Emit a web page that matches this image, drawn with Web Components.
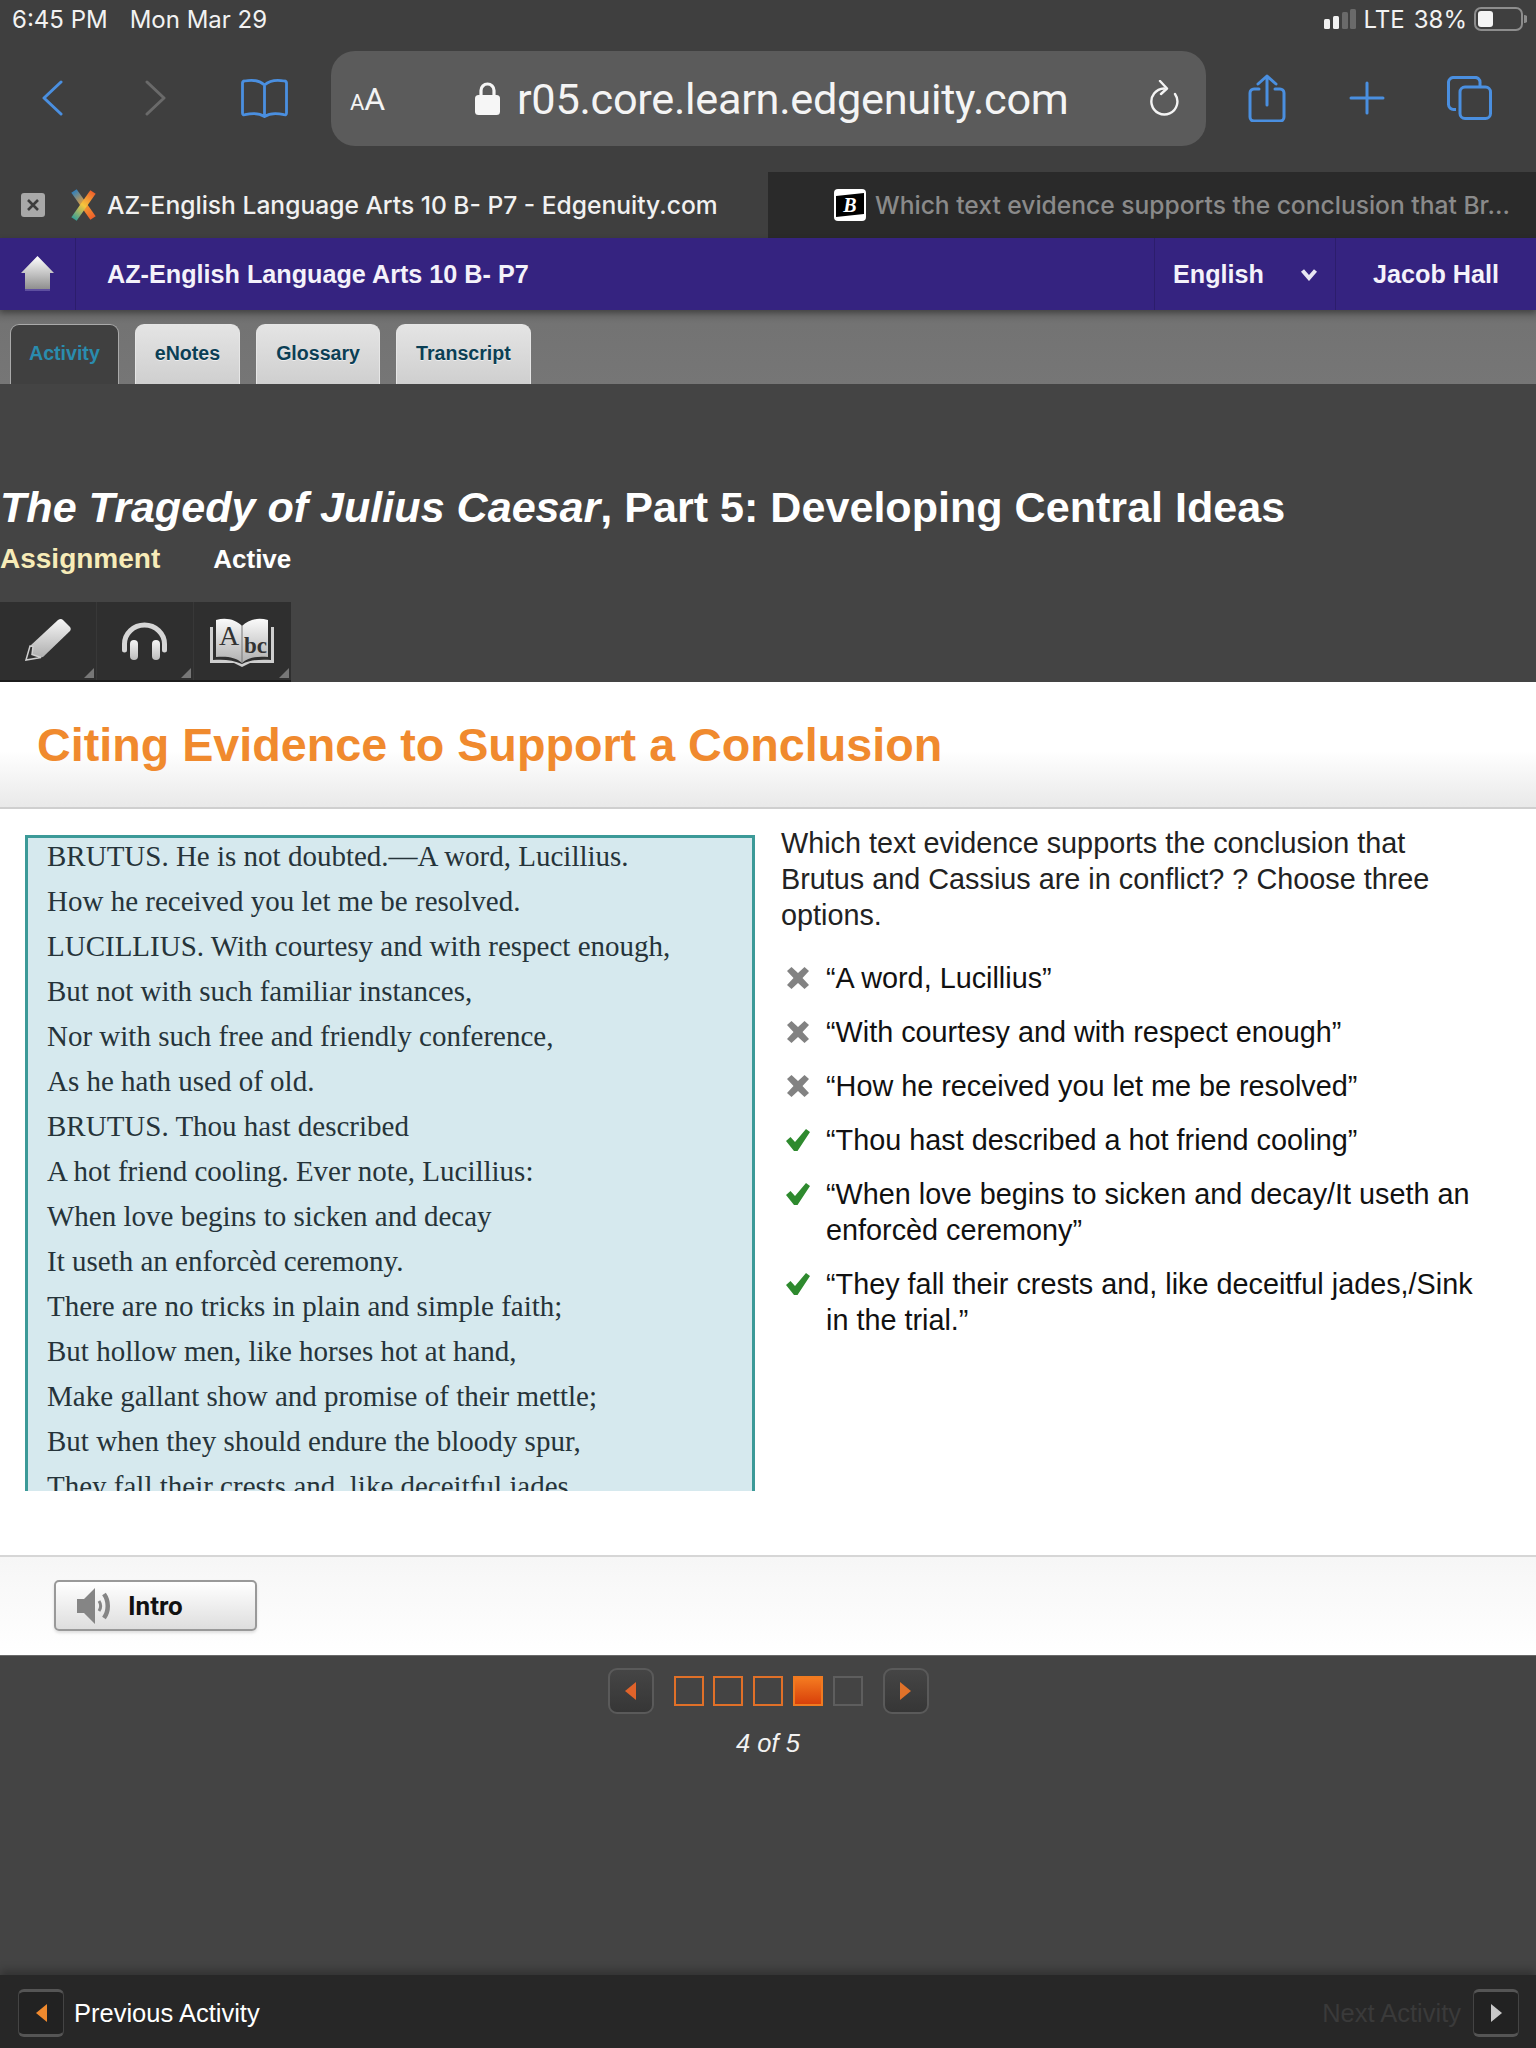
<!DOCTYPE html>
<html><head><meta charset="utf-8"><style>
html,body{margin:0;padding:0;background:#444}
body{width:1536px;height:2048px;overflow:hidden;font-family:"Liberation Sans",Arial,sans-serif;display:flex;flex-direction:column}
</style></head><body>
<status-bar></status-bar>
<browser-toolbar></browser-toolbar>
<browser-tabs></browser-tabs>
<course-bar></course-bar>
<activity-tabs></activity-tabs>
<lesson-head></lesson-head>
<section-title>Citing Evidence to Support a Conclusion</section-title>
<activity-body>
<passage-pane slot="left">
<p>BRUTUS. He is not doubted.—A word, Lucillius.</p>
<p>How he received you let me be resolved.</p>
<p>LUCILLIUS. With courtesy and with respect enough,</p>
<p>But not with such familiar instances,</p>
<p>Nor with such free and friendly conference,</p>
<p>As he hath used of old.</p>
<p>BRUTUS. Thou hast described</p>
<p>A hot friend cooling. Ever note, Lucillius:</p>
<p>When love begins to sicken and decay</p>
<p>It useth an enforcèd ceremony.</p>
<p>There are no tricks in plain and simple faith;</p>
<p>But hollow men, like horses hot at hand,</p>
<p>Make gallant show and promise of their mettle;</p>
<p>But when they should endure the bloody spur,</p>
<p>They fall their crests and, like deceitful jades,</p>
</passage-pane>
<question-pane slot="right">
<span slot="q">Which text evidence supports the conclusion that Brutus and Cassius are in conflict? ? Choose three options.</span>
<answer-item>“A word, Lucillius”</answer-item>
<answer-item>“With courtesy and with respect enough”</answer-item>
<answer-item>“How he received you let me be resolved”</answer-item>
<answer-item correct>“Thou hast described a hot friend cooling”</answer-item>
<answer-item correct>“When love begins to sicken and decay/It useth an enforcèd ceremony”</answer-item>
<answer-item correct>“They fall their crests and, like deceitful jades,/Sink in the trial.”</answer-item>
</question-pane>
</activity-body>
<intro-bar></intro-bar>
<pager-area></pager-area>
<footer-nav></footer-nav>
<script>
const def=(name,html)=>customElements.define(name,class extends HTMLElement{constructor(){super();this.attachShadow({mode:'open'}).innerHTML=html}});
const blue='#4a8fe0';
def('status-bar',`<style>:host{display:flex;height:40px;flex:none;box-sizing:border-box;background:#3f3f3f;color:#f2f2f2;align-items:center;padding:0 9px 2px 12px;font:24px Inter,sans-serif}
.d{margin-left:22px}.r{margin-left:auto;display:flex;align-items:center}
svg{display:block}</style>
<span>6:45 PM</span><span class="d">Mon Mar 29</span>
<span class="r"><svg width="32" height="22" viewBox="0 0 32 22" style="margin-right:8px"><rect x="0" y="11" width="6" height="10" rx="1.500" fill="#f2f2f2"/><rect x="9" y="8" width="6" height="13" rx="1.500" fill="#f2f2f2"/><rect x="18" y="4" width="6" height="17" rx="1.500" fill="#6a6a6a"/><rect x="26" y="1" width="6" height="20" rx="1.500" fill="#6a6a6a"/></svg>
<span>LTE</span><span style="margin-left:9px">38%</span>
<svg width="53" height="24" viewBox="0 0 53 24" style="margin-left:7px"><rect x="1" y="1" width="47" height="22" rx="6" fill="none" stroke="#8d8d8d" stroke-width="2"/><rect x="4" y="4" width="15" height="16" rx="3" fill="#f5f5f5"/><path d="M50 8a4 4 0 0 1 0 8z" fill="#8d8d8d"/></svg></span>`);
def('browser-toolbar',`<style>:host{display:flex;flex:none;height:132px;box-sizing:border-box;padding-bottom:16px;background:#3f3f3f;align-items:center}
svg{display:block;flex:none}
.url{flex:none;width:875px;height:95px;margin-left:43px;background:#5b5b5b;border-radius:24px;display:flex;align-items:center;color:#f4f4f4}
.aa{margin-left:19px;width:41px;margin-top:2px;font:32px Roboto,sans-serif;white-space:nowrap}.aa small{font-size:22px}
.host{font:43.300px Roboto,sans-serif;margin:2px 0 0 17px;letter-spacing:-.3px;white-space:nowrap}
.lock{margin-left:84px}
.rl{margin-left:auto;margin-right:27px}
</style>
<svg style="margin-left:42px" width="21" height="36" viewBox="0 0 21 36"><path d="M19 2 2 18l17 16" fill="none" stroke="${blue}" stroke-width="3" stroke-linecap="round" stroke-linejoin="round"/></svg>
<svg style="margin-left:82px" width="21" height="36" viewBox="0 0 21 36"><path d="M2 2l17 16L2 34" fill="none" stroke="#6a6a6a" stroke-width="3" stroke-linecap="round" stroke-linejoin="round"/></svg>
<svg style="margin-left:75px" width="47" height="40" viewBox="0 0 47 40"><path d="M23.500 7C19 3 11 1.500 3.500 3 2 3 1.500 4 1.500 5v30c0 2 1 2 2.500 1.700C11 35 19 35.500 23.500 38.500 28 35.500 36 35 43 36.700c1.500.3 2.500.3 2.500-1.700V5c0-1-.5-2-2-2C36 1.500 28 3 23.500 7zm0 0v31" fill="none" stroke="${blue}" stroke-width="2.800" stroke-linejoin="round"/></svg>
<div class="url"><span class="aa"><small>A</small>A</span>
<svg class="lock" width="25" height="33" viewBox="0 0 25 33"><path d="M6 15V8.500a6.500 6.500 0 0 1 13 0V15" fill="none" stroke="#f6f6f6" stroke-width="3.200"/><rect x="0" y="13" width="25" height="20" rx="3.500" fill="#f6f6f6"/></svg>
<span class="host">r05.core.learn.edgenuity.com</span>
<svg class="rl" width="30" height="36" viewBox="0 0 30 36"><path d="M15 8.500A13 13 0 1 0 26 14" fill="none" stroke="#f4f4f4" stroke-width="2.400" stroke-linecap="round"/><path d="M11 1l7 7.500-6 5.500" fill="none" stroke="#f4f4f4" stroke-width="2.400" stroke-linecap="round" stroke-linejoin="round"/></svg>
</div>
<svg style="margin-left:42px" width="38" height="48" viewBox="0 0 38 48"><path d="M11 15H6a4 4 0 0 0-4 4v24a4 4 0 0 0 4 4h26a4 4 0 0 0 4-4V19a4 4 0 0 0-4-4h-5M19 31V2M10 10l9-8 9 8" fill="none" stroke="${blue}" stroke-width="3" stroke-linecap="round" stroke-linejoin="round"/></svg>
<svg style="margin-left:63px" width="36" height="34" viewBox="0 0 36 34"><path d="M18 2v30M2 17h32" fill="none" stroke="${blue}" stroke-width="3" stroke-linecap="round"/></svg>
<svg style="margin-left:62px" width="45" height="44" viewBox="0 0 45 44"><rect x="13" y="11" width="30.500" height="31.500" rx="5" fill="none" stroke="${blue}" stroke-width="3"/><path d="M9 33.500H7a5 5 0 0 1-5.500-5V7A5 5 0 0 1 7 1.500h20A5 5 0 0 1 33 7v3" fill="none" stroke="${blue}" stroke-width="3"/></svg>`);
def('browser-tabs',`<style>:host{display:flex;flex:none;height:66px;position:relative}
.t{flex:none;width:768px;display:flex;align-items:center;font:500 24.600px Inter,sans-serif;white-space:nowrap;overflow:hidden;box-sizing:border-box}
.a{background:#3f3f3f;color:#f1f1f1;padding-left:21px}.b{background:#2a2a2a;color:#8a8a8a;padding-left:66px}
svg{display:block;flex:none}
</style><div class="t a">
<svg width="24" height="24" viewBox="0 0 24 24"><rect width="24" height="24" rx="3" fill="#a8a8a8"/><path d="M7 7l10 10M17 7 7 17" stroke="#3d3d3d" stroke-width="2.600"/></svg>
<svg style="margin-left:23px" width="30" height="32" viewBox="0 0 30 32"><defs><linearGradient id="a" gradientUnits="userSpaceOnUse" x1="5" y1="2" x2="26" y2="30"><stop offset="0" stop-color="#2a7fc0"/><stop offset=".5" stop-color="#f4a030"/><stop offset="1" stop-color="#ef5a2a"/></linearGradient><linearGradient id="b" gradientUnits="userSpaceOnUse" x1="25" y1="2" x2="5" y2="30"><stop offset="0" stop-color="#ef5a2a"/><stop offset=".5" stop-color="#f6c63c"/><stop offset="1" stop-color="#2f9e9a"/></linearGradient></defs><path d="M6 2 25 29" stroke="url(#a)" stroke-width="6.500" fill="none"/><path d="M25 3 6 30" stroke="url(#b)" stroke-width="6.500" fill="none"/></svg>
<span style="margin-left:9px">AZ-English Language Arts 10 B- P7 - Edgenuity.com</span></div>
<div class="t b"><svg width="32" height="32" viewBox="0 0 32 32"><rect width="32" height="32" rx="4" fill="#fff"/><path d="M2 7 30 4v21L2 28z" fill="#000"/><text x="16" y="22.500" text-anchor="middle" font-family="Liberation Serif" font-style="italic" font-weight="bold" font-size="20" fill="#fff">B</text></svg>
<span style="margin-left:9px">Which text evidence supports the conclusion that Br...</span></div>`);
def('course-bar',`<style>:host{display:flex;flex:none;height:72px;background:#352380;color:#f4f2fa;font:bold 25.200px "Liberation Sans",sans-serif;align-items:stretch;box-shadow:0 3px 6px rgba(0,0,0,.35);position:relative;z-index:1}
.h{width:75px;border-right:1px solid #2c1d6c;display:flex;align-items:center}
.h svg{margin-left:21px}
.n{flex:1;display:flex;align-items:center;padding-left:31px}
.l{width:181px;border-left:1px solid #2c1d6c;display:flex;align-items:center;padding-left:18px;box-sizing:border-box;position:relative}
.u{width:201px;border-left:1px solid #2c1d6c;display:flex;align-items:center;padding-left:37px;box-sizing:border-box}
svg{display:block}</style>
<div class="h"><svg width="33" height="36" viewBox="0 0 33 36"><defs><linearGradient id="g" x1="0" x2="0" y1="0" y2="1"><stop offset="0" stop-color="#fff"/><stop offset="1" stop-color="#8f8f8f"/></linearGradient></defs><path d="M16.500 0 33 17h-4v16H4V17H0z" fill="url(#g)"/><rect x="4" y="33" width="25" height="2" fill="#5e4fa0"/></svg></div>
<div class="n">AZ-English Language Arts 10 B- P7</div>
<div class="l">English<svg style="position:absolute;left:145px;top:30px" width="18" height="13" viewBox="0 0 18 13"><path d="M2.500 2.500 9 10l6.500-7.500" fill="none" stroke="#e8e6f2" stroke-width="4"/></svg></div>
<div class="u">Jacob Hall</div>`);
def('activity-tabs',`<style>:host{display:flex;flex:none;height:74px;box-sizing:border-box;background:linear-gradient(#666 0,#737373 14px,#767676);align-items:flex-end;padding-left:10px;gap:16px;font:bold 19.600px "Liberation Sans",sans-serif}
.t{height:60px;border-radius:9px 9px 0 0;box-sizing:border-box;display:flex;justify-content:center;align-items:center;padding:0 19px 2px;background:linear-gradient(#e4e4e4,#cfcfcf);border:1px solid #e6e6e6;border-bottom:0;color:#0b3f55;text-shadow:0 1px 0 #eee}
.a{background:#404040;border-color:#aaa;color:#2a8cae;text-shadow:none;padding:0 18px 2px}</style>
<div class="t a">Activity</div><div class="t">eNotes</div><div class="t">Glossary</div><div class="t">Transcript</div>`);
def('lesson-head',`<style>:host{display:block;flex:none;height:298px;background:#444;color:#fff;box-sizing:border-box;padding-top:102px}
h1{margin:0;font:bold 43.100px/1 "Liberation Sans",sans-serif;white-space:nowrap;height:41px}
.m{display:flex;align-items:baseline;font:bold 28px "Liberation Sans",sans-serif;margin-top:16px;height:32px}
.s{color:#f7ecb8}.c{font-size:26px;margin-left:53px}
.tools{display:flex;margin-top:27px;width:291px;height:80px;background:#2f2f2f;border-bottom:2px solid #1c1c1c;box-sizing:border-box}
.b{width:97px;height:78px;position:relative;border-right:1px solid #383838;box-sizing:border-box}
.b:last-child{border:0}
.b::after{content:"";position:absolute;right:2px;bottom:2px;border:5.500px solid transparent;border-right-color:#777;border-bottom-color:#777}
svg{display:block;position:absolute}</style>
<h1><i>The Tragedy of Julius Caesar</i>, Part 5: Developing Central Ideas</h1>
<div class="m"><span class="s">Assignment</span><span class="c">Active</span></div>
<div class="tools">
<div class="b"><svg style="left:25px;top:16px" width="46" height="43" viewBox="0 0 46 43"><defs><linearGradient id="p" x1="0" x2="0" y1="0" y2="1"><stop offset="0" stop-color="#f6f6f6"/><stop offset="1" stop-color="#a9a9a9"/></linearGradient></defs><path d="M1 42 5 28 33 2q3-2 5 0l7 7q1.500 2 0 4L18 39z" fill="url(#p)"/><path d="M1 42l4-14 3 .5-1 8 9 3z" fill="#2f2f2f" stroke="#cfcfcf" stroke-width="1.500"/></svg></div>
<div class="b"><svg style="left:24px;top:20px" width="47" height="38" viewBox="0 0 47 38"><defs><linearGradient id="h" x1="0" x2="0" y1="0" y2="1"><stop offset="0" stop-color="#f6f6f6"/><stop offset="1" stop-color="#bdbdbd"/></linearGradient></defs><path d="M3.500 28v-6a20 19 0 0 1 40 0v6" fill="none" stroke="#d6d6d6" stroke-width="5" stroke-linecap="round"/><rect x="9" y="18" width="8" height="20" rx="4" fill="url(#h)"/><rect x="31" y="18" width="8" height="20" rx="4" fill="url(#h)"/></svg></div>
<div class="b"><svg style="left:16px;top:16px" width="64" height="50" viewBox="0 0 64 50"><defs><linearGradient id="k" x1="0" x2="0" y1="0" y2="1"><stop offset="0" stop-color="#fafafa"/><stop offset="1" stop-color="#b0b0b0"/></linearGradient></defs><path d="M0 9h3v33c10-1 21 0 29 4 8-4 19-5 29-4V9h3v36H40l-8 4-8-4H0z" fill="#cfcfcf"/><path d="M6 2c11-3 20 0 26 6 6-6 15-9 26-6v37c-10-1-20 0-26 6-6-6-16-7-26-6z" fill="url(#k)"/><path d="M32 8v37" stroke="#777"/><text x="9" y="27" font-family="Liberation Serif" font-size="28" fill="#333">A</text><text x="34" y="35" font-family="Liberation Serif" font-weight="bold" font-size="23" fill="#333">bc</text></svg></div>
</div>`);
def('section-title',`<style>:host{display:flex;flex:none;height:127px;box-sizing:border-box;background:linear-gradient(#fff 55%,#e9e9e9);border-bottom:2px solid #cfcfcf;align-items:center;padding:0 0 0 37px;color:#f08a2e;font:bold 46.700px "Liberation Sans",sans-serif}</style><slot></slot>`);
def('activity-body',`<style>:host{display:flex;flex:none;height:746px;background:#fff;box-sizing:border-box;padding:26px 0 0 25px}</style><slot name="left"></slot><slot name="right"></slot>`);
def('passage-pane',`<style>:host{display:block;width:730px;height:656px;box-sizing:border-box;background:#d6e9ee;border:3px solid #3c9a98;border-bottom:0;padding-left:19px;overflow:hidden;font:29px/45px "Liberation Serif","DejaVu Serif",serif;color:#26343a}
::slotted(p){margin:0;white-space:nowrap}
.in{margin-top:-4px}</style><div class="in"><slot></slot></div>`);
def('question-pane',`<style>:host{display:block;margin:-10px 0 0 26px;width:720px;color:#222;font:28.800px/36px "Liberation Sans",sans-serif}
.q{margin-bottom:27px;width:680px}.l{display:flex;flex-direction:column;gap:18px}</style>
<div class="q"><slot name="q"></slot></div><div class="l"><slot></slot></div>`);
customElements.define('answer-item',class extends HTMLElement{constructor(){super();this.attachShadow({mode:'open'}).innerHTML=`<style>:host{display:flex;color:#111;font:28.800px/36px "Liberation Sans",sans-serif;width:705px}
svg{display:block;flex:none;margin:7px 16px 0 5px}</style><svg width="24" height="22" viewBox="0 0 24 22"></svg><span><slot></slot></span>`}
connectedCallback(){this.shadowRoot.querySelector('svg').innerHTML=this.hasAttribute('correct')?'<path d="M0 12l4.500-4 4.500 5L20 0l4 3-12.500 19H8z" fill="#2e8a2e"/>':'<path d="M1 4l4.500-4L12 6l6.500-6L23 4l-6.500 7 6.500 7-4.500 4L12 16l-6.500 6L1 18l6.500-7z" fill="#828282"/>'}});
def('intro-bar',`<style>:host{display:block;flex:none;height:100px;box-sizing:border-box;border-top:2px solid #d6d6d6;background:linear-gradient(#f6f6f6,#fff);padding:23px 0 0 54px}
.b{width:203px;height:51px;box-sizing:border-box;border:2px solid #999;border-radius:5px;background:linear-gradient(#fff,#dedede);display:flex;align-items:center;padding-left:20px;font:bold 26px Roboto,"Liberation Sans",sans-serif;color:#111;box-shadow:0 2px 3px rgba(0,0,0,.12)}
svg{display:block;margin-right:15px}</style><div class="b"><svg width="37" height="38" viewBox="0 0 37 38"><path d="M1 12h7L19 1v36L8 26H1z" fill="#858585"/><path d="M23 14c2 3 2 7 0 10" fill="none" stroke="#858585" stroke-width="3"/><path d="M28 7c5 7 5 17 0 24" fill="none" stroke="#858585" stroke-width="4.500"/></svg>Intro</div>`);
def('pager-area',`<style>:host{display:block;flex:none;height:320px;background:#444;border-top:1px solid #6a6a6a;box-sizing:border-box;padding-top:12px;color:#f2f2f2}
.r{display:flex;justify-content:center;align-items:center;height:46px}
.btn{width:46px;height:46px;box-sizing:border-box;border:2px solid #5a5a5a;border-radius:9px;background:linear-gradient(#454545,#363636);display:flex;align-items:center;justify-content:center}
.s{width:30px;height:30px;box-sizing:border-box;border:2px solid #e07028}
.s.f{background:linear-gradient(#f47a20,#d8400a);border-color:#f07a20}.s.e{border-color:#5e5e5e}
.ss{display:flex;gap:9.750px;margin:0 20px}
.t{text-align:center;font:italic 25.500px "Liberation Sans",sans-serif;margin-top:15px}
svg{display:block}</style>
<div class="r"><div class="btn"><svg width="11" height="18" viewBox="0 0 11 18"><path d="M11 0v18L0 9z" fill="#e0632a"/></svg></div>
<div class="ss"><div class="s"></div><div class="s"></div><div class="s"></div><div class="s f"></div><div class="s e"></div></div>
<div class="btn"><svg width="11" height="18" viewBox="0 0 11 18"><path d="M0 0v18L11 9z" fill="#e0722a"/></svg></div></div>
<div class="t">4 of 5</div>`);
def('footer-nav',`<style>:host{display:flex;height:73px;flex:none;background:#272727;align-items:center;box-shadow:0 -5px 8px rgba(0,0,0,.25);position:relative;padding:3px 17px 0 18px;box-sizing:border-box;justify-content:space-between;color:#fff;font:25.500px "Liberation Sans",sans-serif}
.g{display:flex;align-items:center}
.g span{margin-top:1px}
.b{width:46px;height:48px;box-sizing:border-box;border:1px solid #444;border-top:3px solid #555;border-bottom:3px solid #555;border-radius:6px;background:#222;display:flex;align-items:center;justify-content:center}
svg{display:block}.n{color:#3a3a3a}</style>
<div class="g"><div class="b"><svg width="11" height="18" viewBox="0 0 11 18"><path d="M11 0v18L0 9z" fill="#f08a2e"/></svg></div><span style="margin-left:10px">Previous Activity</span></div>
<div class="g"><span class="n" style="margin-right:12px">Next Activity</span><div class="b"><svg width="11" height="18" viewBox="0 0 11 18"><path d="M0 0v18L11 9z" fill="#c8c8c8"/></svg></div></div>`);
</script>
</body></html>
